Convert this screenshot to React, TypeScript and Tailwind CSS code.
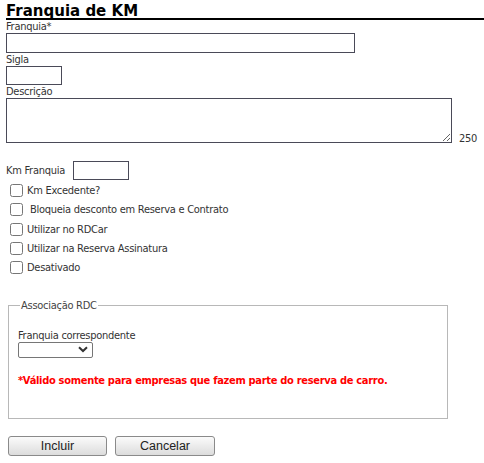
import { useState } from "react";

const boxes = [
  { label: "Km Excedente?", pad: "" },
  { label: "Bloqueia desconto em Reserva e Contrato", pad: "pl-[3px]" },
  { label: "Utilizar no RDCar", pad: "" },
  { label: "Utilizar na Reserva Assinatura", pad: "" },
  { label: "Desativado", pad: "" },
];

export default function App() {
  const [desc, setDesc] = useState("");

  return (
    <div className="w-[484px] h-[463px] bg-white text-[#333] text-[11px] leading-[13px] tracking-[-0.27px] font-['DejaVu_Sans_Condensed','DejaVu_Sans',sans-serif] overflow-hidden">
      <div className="pl-[6px] pt-[5px]">
        <h1 className="font-['DejaVu_Sans',sans-serif] font-bold text-[15px] leading-[13px] tracking-normal text-black border-b-2 border-black">
          Franquia de KM
        </h1>

        <div className="h-[13px]">Franquia*</div>
        <input className="block w-[349px] h-[20px] border border-[#4a4a58] outline-none px-1" />

        <div className="h-[13px]">Sigla</div>
        <input className="block w-[56px] h-[19px] border border-[#4a4a58] outline-none px-1" />

        <div className="h-[13px]">Descrição</div>
        <div className="flex items-end gap-[7px] h-[45px]">
          <textarea
            value={desc}
            onChange={(e) => setDesc(e.target.value)}
            className="block w-[446px] h-[45px] border border-[#4a4a58] outline-none"
          />
          <span className="mb-[-2px]">{250 - desc.length}</span>
        </div>

        <div className="flex items-center mt-[18px] h-[19px]">
          <span className="w-[67px]">Km Franquia</span>
          <input className="block w-[56px] h-[19px] border border-[#4a4a58] outline-none px-1" />
        </div>

        <div className="mt-[1px] flex flex-col">
          {boxes.map((b) => (
            <label key={b.label} className="flex items-center h-[19.3px]">
              <input type="checkbox" className="m-0 ml-[4px] w-[13px] h-[13px]" />
              <span className={"ml-[4px] " + b.pad}>{b.label}</span>
            </label>
          ))}
        </div>
      </div>

      <fieldset className="mx-[8px] mt-[22px] w-[440px] h-[120px] border border-[#b8b8b8] px-[9px]">
        <legend className="ml-[2px] px-[1px] text-[#444]">Associação RDC</legend>
        <div className="mt-[17px]">Franquia correspondente</div>
        <div className="relative w-[75px] h-[16px]">
          <select className="appearance-none block w-[75px] h-[16px] border border-[#767676] rounded-[2px] bg-white outline-none" />
          <svg className="absolute right-[5px] top-[4px] pointer-events-none" width="10" height="7" viewBox="0 0 10 7">
            <path d="M1 1.2 L5 5 L9 1.2" fill="none" stroke="#333" strokeWidth="2" />
          </svg>
        </div>
        <p className="mt-[16px] font-bold text-[#ff0000] tracking-[-0.3px]">
          *Válido somente para empresas que fazem parte do reserva de carro.
        </p>
      </fieldset>

      <div className="flex gap-[8px] ml-[8px] mt-[17px] font-['Liberation_Sans',sans-serif] text-[12.5px] tracking-normal text-[#222]">
        <button className="w-[99px] h-[20px] rounded-[3px] border border-[#8a8a8a] bg-gradient-to-b from-[#fbfbfb] to-[#dcdcdc] leading-[18px]">
          Incluir
        </button>
        <button className="w-[100px] h-[20px] rounded-[3px] border border-[#8a8a8a] bg-gradient-to-b from-[#fbfbfb] to-[#dcdcdc] leading-[18px]">
          Cancelar
        </button>
      </div>
    </div>
  );
}
